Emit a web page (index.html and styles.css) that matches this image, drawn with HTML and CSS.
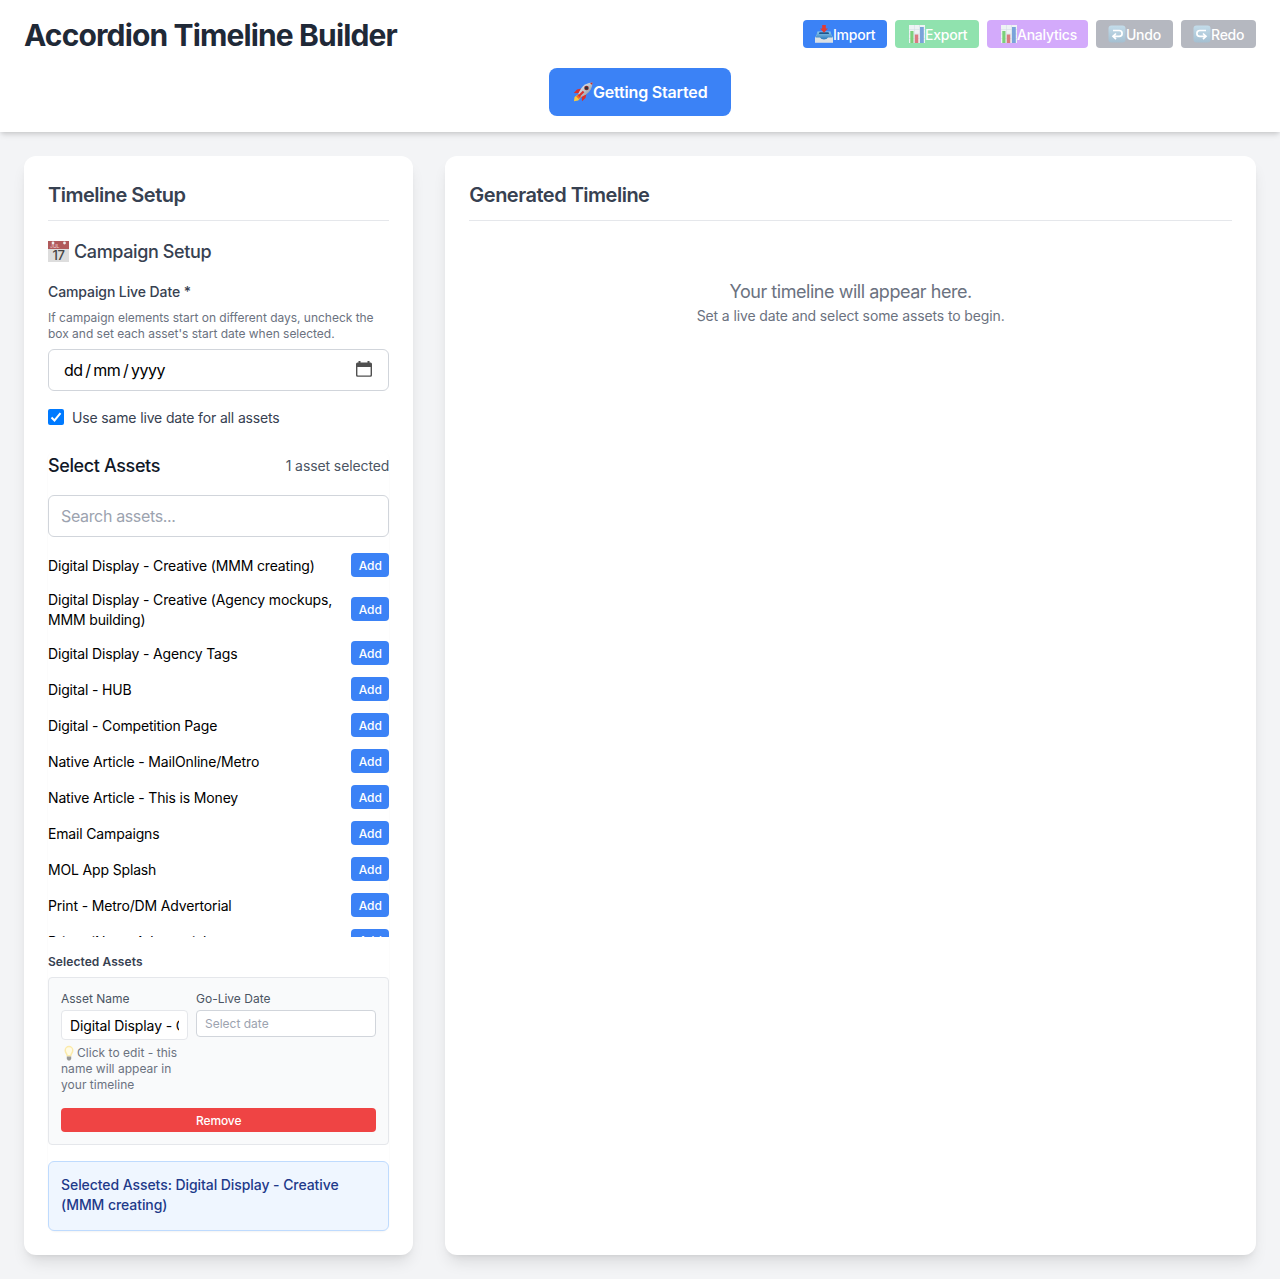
FILE: index.html
```html
<!DOCTYPE html>
<html lang="en">
<head>
<meta charset="utf-8">
<title>Accordion Timeline Builder</title>
<link rel="stylesheet" href="styles.css">
</head>
<body>
<svg class="defs" aria-hidden="true">
  <defs>
    <linearGradient id="tray" x1="0" y1="0" x2="0" y2="1"><stop offset="0" stop-color="#8fcbee"/><stop offset="1" stop-color="#2574b8"/></linearGradient>
    <linearGradient id="key" x1="0" y1="0" x2="0" y2="1"><stop offset="0" stop-color="#c3dcea"/><stop offset="1" stop-color="#a4bfd1"/></linearGradient>
    <linearGradient id="hull" x1="0" y1="0" x2="1" y2="1"><stop offset="0" stop-color="#fff"/><stop offset="1" stop-color="#7c8590"/></linearGradient>
    <symbol id="chart" viewBox="0 0 16 18">
      <path fill="#eef3f5" d="M0 0h16v18H0z"/>
      <path stroke="#d5dfe6" stroke-width=".6" d="M0 4.5h16M0 9h16M0 13.5h16M5.500 0v18M10.500 0v18"/>
      <path fill="#7bd07b" d="M1.300 6h3.200v12H1.300z"/>
      <path fill="#d97b80" d="M5.800 9.500h3.500V18H5.800z"/>
      <path fill="#7aa3da" d="M11 2h3.800v16H11z"/>
    </symbol>
  </defs>
</svg>

<header class="header">
  <div class="header-row">
    <h1 class="title">Accordion Timeline Builder</h1>
    <div class="actions">
      <button class="action import"><svg class="emoji" viewBox="0 0 18 18"><path fill="#e7ebee" d="M3.500 7h11L18 13v4.500H0V13z"/><path fill="url(#tray)" d="M2.500 6.500h13L17.500 13h-4.600c-.8 2.600-7 2.600-7.800 0H.5z"/><path fill="#1b568f" d="M4.500 7.300h9l.6 1.700H3.900z"/><path fill="#dce0e3" d="M0 12.500h5c1 2.500 7 2.500 8 0h5v5H0z"/><path fill="#e13b34" d="M7.200 0h3.600v3.500H13L9 7.700 5 3.500h2.200z"/></svg>Import</button>
      <button class="action export"><svg class="emoji chart"><use href="#chart"/></svg>Export</button>
      <button class="action analytics"><svg class="emoji chart"><use href="#chart"/></svg>Analytics</button>
      <button class="action history"><svg class="emoji" viewBox="0 0 18 18"><rect x=".5" y=".5" width="17" height="17" rx="3" fill="url(#key)"/><path d="M5 5.500h6.200a2.900 2.900 0 0 1 0 5.800H5.500M8 8.500l-3 2.800 3 2.800" fill="none" stroke="#fff" stroke-width="1.700"/></svg>Undo</button>
      <button class="action history"><svg class="emoji" viewBox="0 0 18 18"><rect x=".5" y=".5" width="17" height="17" rx="3" fill="url(#key)"/><path d="M13 5.500H6.800a2.900 2.900 0 0 0 0 5.800h5.700M10 8.500l3 2.800-3 2.800" fill="none" stroke="#fff" stroke-width="1.700"/></svg>Redo</button>
    </div>
  </div>
  <button class="start"><svg class="emoji rocket" viewBox="0 0 20 20"><path fill="#d9302c" d="M8.500 6.500 4 7.500.8 11l4.700.3zM13.500 11.500 12.500 16 9 19.200l-.3-4.700z"/><path fill="#f9c93d" d="M5 12.500 1.500 15 1 19.300l4.200-.8L8 15.300z"/><path fill="#ef6b2e" d="m5.800 12-2.600 2.500 2.600 2.500 2.400-2z"/><path fill="url(#hull)" d="M19.500.5c-5 .1-9 2.200-11.500 6.200l-2.800 5 3.200 3.200 5-2.700c3.900-2.500 6-6.500 6.100-11.700z"/><path fill="#c92a2a" d="M19.500.5 17 .9l2.100 2.200z"/><circle cx="13.500" cy="6" r="2.300" fill="#982b2b"/><circle cx="13.500" cy="6" r="1.600" fill="#26333f"/><path fill="#d9302c" d="m9.800 8.700 1.500 1.500L6.500 15 5 13.500z"/></svg>Getting Started</button>
</header>

<main class="main">
  <section class="card">
    <h2 class="card-title">Timeline Setup</h2>
    <h3 class="campaign"><svg class="calendar" viewBox="0 0 21 21"><path fill="#ddd" d="M0 0h21v21H0z"/><path fill="#b05a5b" d="M0 0h21v8H0z"/><circle cx="5" cy="2" r="1.400" fill="#eee"/><circle cx="16.500" cy="2" r="1.400" fill="#eee"/><text x="2" y="7" class="cal-month">JUL</text><text x="10.500" y="19" class="cal-day">17</text></svg>Campaign Setup</h3>
    <div class="label">Campaign Live Date *</div>
    <p class="hint">If campaign elements start on different days, uncheck the box and set each asset's start date when selected.</p>
    <div class="field date-field"><span class="date-parts"><span>dd</span><span>/</span><span>mm</span><span>/</span><span>yyyy</span></span><svg class="picker" viewBox="0 0 16 16"><path fill="#505050" fill-rule="evenodd" d="M2.500 0h2v1.500h7V0h2v1.500h1A1.500 1.500 0 0 1 16 3v11.200a1.600 1.600 0 0 1-1.600 1.600H1.600A1.600 1.600 0 0 1 0 14.200V3a1.500 1.500 0 0 1 1.500-1.500h1zM1.400 6v8c0 .3.200.5.500.5h12.200c.3 0 .5-.2.500-.5V6z"/></svg></div>
    <div class="same-date"><svg class="check" viewBox="0 0 16 16"><rect width="16" height="16" rx="2" fill="#007aff"/><path d="m3.500 8.500 3 3 6-7.300" fill="none" stroke="#fff" stroke-width="2"/></svg><span>Use same live date for all assets</span></div>

    <div class="assets">
      <div class="assets-head"><h3 class="assets-title">Select Assets</h3><span class="count">1 asset selected</span></div>
      <div class="field search">Search assets...</div>
      <div class="list">
        <div class="item"><span>Digital Display - Creative (MMM creating)</span><button class="add">Add</button></div>
        <div class="item"><span>Digital Display - Creative (Agency mockups, MMM building)</span><button class="add">Add</button></div>
        <div class="item"><span>Digital Display - Agency Tags</span><button class="add">Add</button></div>
        <div class="item"><span>Digital - HUB</span><button class="add">Add</button></div>
        <div class="item"><span>Digital - Competition Page</span><button class="add">Add</button></div>
        <div class="item"><span>Native Article - MailOnline/Metro</span><button class="add">Add</button></div>
        <div class="item"><span>Native Article - This is Money</span><button class="add">Add</button></div>
        <div class="item"><span>Email Campaigns</span><button class="add">Add</button></div>
        <div class="item"><span>MOL App Splash</span><button class="add">Add</button></div>
        <div class="item"><span>Print - Metro/DM Advertorial</span><button class="add">Add</button></div>
        <div class="item"><span>Print - iNews Advertorial</span><button class="add">Add</button></div>
      </div>
      <h4 class="selected-title">Selected Assets</h4>
      <div class="selected">
        <div class="selected-grid">
          <div class="name-col">
            <div class="small-label">Asset Name</div>
            <div class="name-input"><span>Digital Display - Creative (MMM creating)</span></div>
            <p class="note"><svg class="bulb" viewBox="0 0 16 16"><path fill="#fbeaaa" d="M8 .8a4.500 4.500 0 0 1 4.500 4.600c0 2.600-2 3.600-2.200 6H5.700c-.2-2.400-2.200-3.400-2.200-6A4.500 4.500 0 0 1 8 .8z"/><path fill="#fffbe5" d="M8 2.200a3 3 0 0 1 3 3.200C11 7.500 9.500 8 9.200 10H6.800C6.500 8 5 7.500 5 5.400a3 3 0 0 1 3-3.200z"/><path fill="#9a9a98" d="M5.800 11.400h4.400V14L9 15.500H7L5.800 14z"/></svg>Click to edit - this name will appear in your timeline</p>
          </div>
          <div class="date-col">
            <div class="small-label">Go-Live Date</div>
            <div class="date-input">Select date</div>
          </div>
        </div>
        <button class="remove">Remove</button>
      </div>
      <div class="summary">Selected Assets: Digital Display - Creative (MMM creating)</div>
    </div>
  </section>

  <section class="card">
    <h2 class="card-title">Generated Timeline</h2>
    <div class="empty">
      <p class="empty-title">Your timeline will appear here.</p>
      <p class="empty-text">Set a live date and select some assets to begin.</p>
    </div>
  </section>
</main>
</body>
</html>
```
FILE: styles.css
```css
* { box-sizing: border-box; margin: 0; padding: 0; }
body { background: #f3f4f6; font-family: Inter, "Liberation Sans", sans-serif; font-size: 16px; line-height: 24px; color: #000; }
button { border: 0; font: inherit; letter-spacing: inherit; color: #fff; }
svg { display: block; flex: none; }
.defs { position: absolute; width: 0; height: 0; }

.header { display: flex; flex-direction: column; align-items: center; gap: 16px; height: 132px; padding: 16px 24px; background: #fff; box-shadow: 0 4px 6px -1px rgba(0,0,0,.1), 0 2px 4px -1px rgba(0,0,0,.1); }
.header-row { display: flex; justify-content: space-between; align-items: center; width: 100%; height: 36px; }
.title { font-size: 30px; line-height: 36px; font-weight: 700; letter-spacing: -.86px; color: #1f2937; padding-top: 2px; }
.actions { display: flex; gap: 8px; }
.action { display: flex; align-items: center; height: 28px; padding: 2px 12px 0; border-radius: 4px; font-size: 14px; line-height: 20px; font-weight: 500; letter-spacing: -.24px; white-space: nowrap; }
.emoji { width: 18px; height: 18px; margin-top: -2px; }
.emoji.chart { width: 16px; margin: -2px 0 0 2px; }
.import { width: 84px; background: #3b82f6; }
.export { width: 84px; background: #90e2ae; }
.analytics { width: 101px; background: #d3aafb; }
.history { background: #b5b8c0; }
.history:nth-child(4) { width: 77px; }
.history:nth-child(5) { width: 75px; }
.start { display: flex; align-items: center; width: 182px; height: 48px; padding: 0 24px; border-radius: 8px; background: #3b82f6; font-weight: 600; letter-spacing: -.18px; white-space: nowrap; }
.emoji.rocket { width: 20px; height: 20px; margin: 0; }

.main { display: grid; grid-template-columns: 389.33px 1fr; gap: 32px; height: 1147px; padding: 24px; }
.card { min-width: 0; padding: 24px; border-radius: 12px; background: #fff; box-shadow: 0 10px 15px -3px rgba(0,0,0,.1), 0 4px 6px -4px rgba(0,0,0,.1); }
.card-title { height: 41px; padding-top: 1px; border-bottom: 1px solid #e5e7eb; font-size: 20px; line-height: 28px; font-weight: 600; letter-spacing: -.5px; color: #374151; }
.campaign { display: flex; gap: 5px; margin-top: 17px; font-size: 18px; line-height: 28px; font-weight: 500; letter-spacing: -.38px; color: #374151; }
.calendar { width: 21px; height: 21px; margin-top: 3px; }
.cal-month { font-size: 5px; letter-spacing: 0; fill: #e9c8c8; }
.cal-day { font-size: 13px; font-weight: 500; fill: #444; text-anchor: middle; }
.label { margin-top: 16px; font-size: 14px; line-height: 20px; font-weight: 500; letter-spacing: -.1px; color: #374151; }
.hint { margin-top: 8px; font-size: 12px; line-height: 16px; letter-spacing: -.02px; color: #6b7280; }
.field { display: flex; align-items: center; height: 42px; border: 1px solid #d1d5db; border-radius: 6px; background: #fff; letter-spacing: -.35px; }
.date-field { justify-content: space-between; margin-top: 7px; padding: 0 16px 0 15px; letter-spacing: -.45px; }
.date-parts { display: flex; gap: 2.6px; }
.picker { width: 16px; height: 16px; margin-top: -2px; }
.same-date { display: flex; gap: 8px; margin-top: 17px; font-size: 14px; line-height: 20px; letter-spacing: -.15px; color: #374151; }
.check { width: 16px; height: 16px; margin-top: 1px; }

.assets { margin-top: 23px; border-radius: 8px; box-shadow: 0 1px 2px rgba(0,0,0,.05); }
.assets-head { display: flex; justify-content: space-between; align-items: center; padding-top: 1px; }
.assets-title { font-size: 18px; line-height: 28px; font-weight: 500; letter-spacing: -.38px; color: #111827; }
.count { font-size: 14px; line-height: 20px; letter-spacing: -.1px; color: #4b5563; }
.search { margin-top: 15px; padding-left: 12px; color: #9ca3af; }
.list { display: flex; flex-direction: column; gap: 12px; height: 384px; margin-top: 16px; overflow: hidden; font-size: 14px; line-height: 20px; letter-spacing: -.16px; }
.item { display: flex; flex: none; justify-content: space-between; align-items: center; }
.item span { width: 290px; padding-top: 1px; margin-bottom: -1px; }
.add { width: 38px; height: 24px; border-radius: 4px; background: #3b82f6; font-size: 12px; line-height: 16px; font-weight: 500; letter-spacing: 0; padding-top: 1px; }
.item:last-child .add { padding-top: 0; }
.selected-title { margin-top: 16px; padding-top: 1px; font-size: 12px; line-height: 16px; font-weight: 600; letter-spacing: .07px; color: #374151; }
.selected { height: 168px; margin-top: 7px; padding: 12px; border: 1px solid #e5e7eb; border-radius: 4px; background: #f9fafb; }
.selected-grid { display: grid; grid-template-columns: 127px 1fr; gap: 8px; height: 102px; }
.name-col { min-width: 0; }
.small-label { padding-top: 1px; font-size: 12px; line-height: 16px; color: #4b5563; }
.name-input { height: 30px; margin-top: 3px; padding: 5px 8px; border: 1px solid #e5e7eb; border-radius: 4px; background: #fff; font-size: 14px; line-height: 20px; letter-spacing: -.12px; white-space: nowrap; }
.name-input span { display: block; overflow: hidden; }
.note { margin-top: 5px; font-size: 12px; line-height: 16px; letter-spacing: .03px; color: #6b7280; }
.bulb { display: inline-block; width: 16px; height: 16px; vertical-align: -4px; }
.date-input { height: 27px; margin-top: 3px; padding: 4px 8px; border: 1px solid #d1d5db; border-radius: 4px; background: #fff; font-size: 12px; line-height: 17px; color: #9ca3af; }
.remove { display: block; width: 100%; height: 24px; margin-top: 16px; border-radius: 4px; background: #ef4444; font-size: 12px; line-height: 16px; font-weight: 500; letter-spacing: -.1px; padding-top: 1px; }
.summary { height: 70px; margin-top: 16px; padding: 13px 12px; border: 1px solid #bfdbfe; border-radius: 6px; background: #eff6ff; font-size: 14px; line-height: 20px; font-weight: 500; letter-spacing: -.07px; color: #1e3a8a; }

.empty { padding-top: 57px; text-align: center; color: #6b7280; }
.empty-title { font-size: 18px; line-height: 28px; letter-spacing: -.46px; }
.empty-text { font-size: 14px; line-height: 20px; letter-spacing: -.12px; }
```
